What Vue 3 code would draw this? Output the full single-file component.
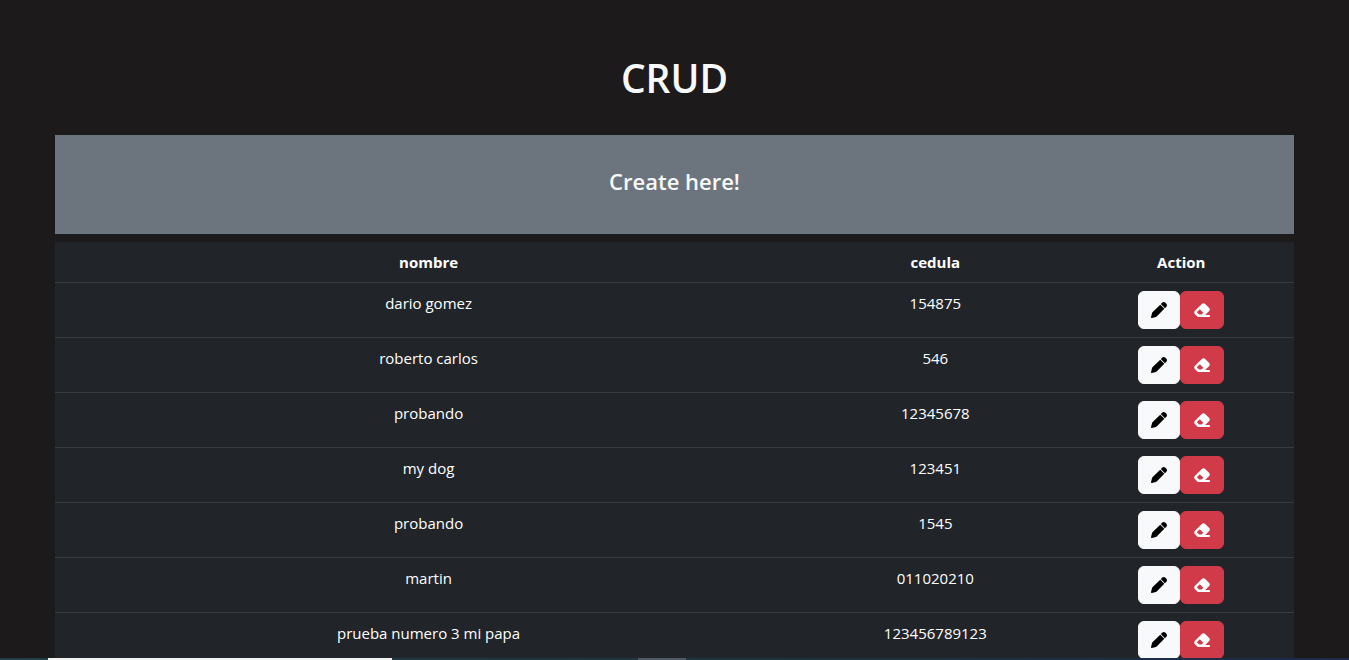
<script setup>
const people = [
  { nombre: 'dario gomez', cedula: '154875' },
  { nombre: 'roberto carlos', cedula: '546' },
  { nombre: 'probando', cedula: '12345678' },
  { nombre: 'my dog', cedula: '123451' },
  { nombre: 'probando', cedula: '1545' },
  { nombre: 'martin', cedula: '011020210' },
  { nombre: 'prueba numero 3 mi papa', cedula: '123456789123' },
]
</script>

<template>
  <div class="page">
    <main class="content">
      <h1>CRUD</h1>
      <section class="create">
        <h2>Create here!</h2>
      </section>
      <table>
        <colgroup>
          <col class="col-name" />
          <col class="col-id" />
          <col class="col-action" />
        </colgroup>
        <thead>
          <tr>
            <th scope="col">nombre</th>
            <th scope="col">cedula</th>
            <th scope="col">Action</th>
          </tr>
        </thead>
        <tbody>
          <tr v-for="person in people" :key="person.cedula">
            <td>{{ person.nombre }}</td>
            <td>{{ person.cedula }}</td>
            <td>
              <div class="actions">
                <button type="button" class="btn edit" aria-label="Edit">
                  <svg width="16" height="16" viewBox="0 0 512 512" fill="currentColor" aria-hidden="true">
                    <path d="M362.7 19.3L314.3 67.7 444.3 197.7l48.4-48.4c25-25 25-65.5 0-90.5L453.3 19.3c-25-25-65.5-25-90.5 0zM296 86L54 323c-10.4 10.4-18 23.3-22.2 37.4L1 481.2C-1.5 489.7 .8 498.8 7 505s15.3 8.5 23.7 6.1l122-31c14.1-4.2 27-11.8 37.4-22.2L426 216 296 86z" />
                  </svg>
                </button>
                <button type="button" class="btn erase" aria-label="Delete">
                  <svg width="18" height="16" viewBox="0 0 576 512" fill="currentColor" aria-hidden="true">
                    <path d="M290.7 57.4L57.4 290.7c-25 25-25 65.5 0 90.5l80 80c12 12 28.3 18.7 45.3 18.7H512c17.7 0 32-14.3 32-32s-14.3-32-32-32H387.9L518.6 285.3c25-25 25-65.5 0-90.5L381.3 57.4c-25-25-65.5-25-90.5 0zM275 400H195L122 328 218 232 330 344 275 400z" />
                  </svg>
                </button>
              </div>
            </td>
          </tr>
        </tbody>
      </table>
    </main>
    <div class="strip" aria-hidden="true">
      <span class="strip-light"></span>
      <span class="strip-grey"></span>
    </div>
  </div>
</template>

<style>
body {
  margin: 0;
  background: #1c1a1a;
}
</style>

<style scoped>
.page {
  height: 100vh;
  overflow: hidden;
  background: #1c1a1a;
  color: #fff;
  font-family: "Segoe UI", "Open Sans", "Noto Sans", sans-serif;
  font-size: 15px;
  line-height: 24px;
  text-align: center;
}
.content {
  padding: 55px 55px 0;
}
h1 {
  margin: 0 0 34px;
  color: #f8f9fa;
  font-size: 39px;
  font-weight: 600;
  line-height: 46px;
}
.create {
  box-sizing: border-box;
  margin-bottom: 8px;
  padding: 32px 16px 39px;
  background: #6c757d;
}
h2 {
  margin: 0;
  color: #f8f9fa;
  font-size: 22px;
  font-weight: 600;
  line-height: 28px;
}
table {
  width: 100%;
  table-layout: fixed;
  border-collapse: separate;
  border-spacing: 0;
  background: #212529;
}
.col-name {
  width: 60.3%;
}
.col-id {
  width: 21.5%;
}
.col-action {
  width: 18.2%;
}
th,
td {
  padding: 8px;
  border-bottom: 1px solid #373b3e;
  vertical-align: top;
}
th {
  font-weight: 700;
}
.actions {
  display: flex;
  justify-content: center;
}
.btn {
  display: flex;
  align-items: center;
  height: 38px;
  padding: 0 12px;
  border: 1px solid;
  border-radius: 6px;
  cursor: pointer;
}
.btn svg {
  display: block;
}
.edit {
  border-color: #f8f9fa;
  background: #f8f9fa;
  color: #000;
}
.erase {
  border-color: #d03a49;
  background: #d03a49;
  color: #fff;
}
.strip {
  position: fixed;
  right: 0;
  bottom: 0;
  left: 0;
  height: 2px;
  background: linear-gradient(90deg, #263c48, #1e3340 60%, #1c2c48);
}
.strip-light,
.strip-grey {
  position: absolute;
  top: 0;
  bottom: 0;
}
.strip-light {
  left: 48px;
  width: 344px;
  background: #f3f3f3;
}
.strip-grey {
  left: 638px;
  width: 48px;
  background: #4e5b64;
}
</style>
